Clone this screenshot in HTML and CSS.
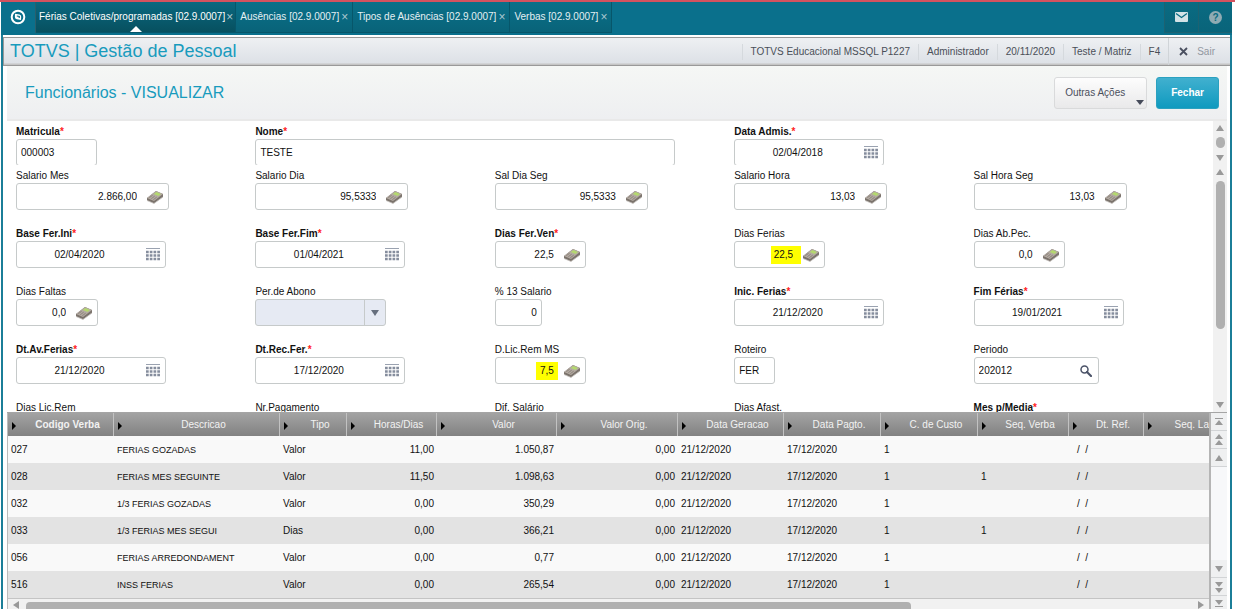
FILE: index.html
```
<!doctype html>
<html lang="pt-br">
<head>
<meta charset="utf-8">
<title>Gestão de Pessoal</title>
<link rel="stylesheet" href="styles.css">
</head>
<body>

<svg class="defs" width="0" height="0">
	<symbol id="calc" viewBox="0 0 18 14">
		<path d="M1 8 L10 1 L17 4 V7 L8 13.500 L1 10.500Z" fill="#7b736c"/>
		<path d="M1 8 L10 1 L17 4 L8 11Z" fill="#b3aaa2"/>
		<path d="M7.700 4 L10.500 1.900 L15 4 L12.500 6Z" fill="#b4d86f"/>
		<path d="M3.500 7.500 L7 5 M5.500 8.500 L9 6 M7.500 9.500 L11 7" stroke="#7f766e" stroke-width="1" stroke-dasharray="1.500 .600"/>
		<path d="M1 10.500 L8 13.500 L17 7" fill="none" stroke="#c9c5c1" stroke-width=".8"/>
	</symbol>
	<symbol id="cal" viewBox="0 0 14 13">
		<path d="M0 .5 H14" stroke="#9aa2b0"/>
		<path d="M0 4 H14 M0 7.500 H14 M0 11 H14" stroke="#858d9d" stroke-width="2.500" stroke-dasharray="2.700 1.060"/>
	</symbol>
	<symbol id="lens" viewBox="0 0 12 12">
		<circle cx="4.500" cy="4.500" r="3.500" fill="none" stroke="#4b5368" stroke-width="1.500"/>
		<path d="M7 7 L11 11" stroke="#4b5368" stroke-width="2.200" stroke-linecap="round"/>
	</symbol>
	<symbol id="up" viewBox="0 0 8 6"><path d="M4 0 L8 6 H0Z"/></symbol>
	<symbol id="down" viewBox="0 0 8 6"><path d="M4 6 L8 0 H0Z"/></symbol>
	<symbol id="up2" viewBox="0 0 8 12"><path d="M4 0 L8 5 H0Z M4 6 L8 11 H0Z"/></symbol>
	<symbol id="down2" viewBox="0 0 8 12"><path d="M4 6 L8 1 H0Z M4 12 L8 7 H0Z"/></symbol>
	<symbol id="first" viewBox="0 0 8 8"><path d="M0 0 H8 V1 H0Z M4 2 L8 7 H0Z"/></symbol>
	<symbol id="last" viewBox="0 0 8 8"><path d="M0 7 H8 V8 H0Z M4 6 L8 1 H0Z"/></symbol>
</svg>

<nav class="topbar">
	<button class="logo" aria-label="Menu">
		<svg width="16" height="16" viewBox="0 0 16 16"><circle cx="8" cy="8" r="6.300" fill="none" stroke="#fff" stroke-width="2"/><path d="M5 4.800 L9.500 5.500 Q11.500 6 11.200 8 L11 11 L6.800 10.300 Q4.800 9.800 4.900 8Z" fill="#fff"/><path d="M6.800 7 L9.300 7.400 L9.200 9" fill="none" stroke="#0a7089" stroke-width="1.200"/></svg>
	</button>
	<div class="tab active"><a href="#">Férias Coletivas/programadas [02.9.0007]</a><button aria-label="Fechar aba">×</button></div>
	<div class="tab"><a href="#">Ausências [02.9.0007]</a><button aria-label="Fechar aba">×</button></div>
	<div class="tab"><a href="#">Tipos de Ausências [02.9.0007]</a><button aria-label="Fechar aba">×</button></div>
	<div class="tab"><a href="#">Verbas [02.9.0007]</a><button aria-label="Fechar aba">×</button></div>
	<div class="tools">
		<button aria-label="Mensagens"><svg width="13" height="10" viewBox="0 0 13 10"><rect width="13" height="10" rx="1" fill="#d3e2e6"/><path d="M1 1.500 L6.500 5.500 L12 1.500" fill="none" stroke="#0a6b82" stroke-width="1.300"/></svg></button>
		<button aria-label="Ajuda"><span class="help">?</span></button>
	</div>
</nav>

<div class="frame">
	<header class="titlebar">
		<h1>TOTVS | Gestão de Pessoal</h1>
		<ul class="info">
			<li>TOTVS Educacional MSSQL P1227</li>
			<li>Administrador</li>
			<li>20/11/2020</li>
			<li>Teste / Matriz</li>
			<li>F4</li>
		</ul>
		<button class="exit"><svg width="9" height="9" viewBox="0 0 9 9"><path d="M1 1 L8 8 M8 1 L1 8" stroke="#4b5060" stroke-width="1.800"/></svg>Sair</button>
	</header>

	<main>
		<div class="pagehead">
			<h2>Funcionários - VISUALIZAR</h2>
			<button class="btn more">Outras Ações<svg width="8" height="5" viewBox="0 0 8 5"><path d="M0 0 H8 L4 5Z" fill="#454b5a"/></svg></button>
			<button class="btn primary">Fechar</button>
		</div>

		<div class="pane head-pane">
			<form class="fields">
				<div class="field"><label class="req" for="mat">Matricula</label><div class="box w81"><input id="mat" value="000003"></div></div>
				<div class="field span2"><label class="req" for="nome">Nome</label><div class="box w420"><input id="nome" value="TESTE"></div></div>
				<div class="field"><label class="req" for="adm">Data Admis.</label><div class="box date"><input id="adm" value="02/04/2018"><svg class="cal"><use href="#cal"/></svg></div></div>
			</form>
			<div class="scroll">
				<svg class="arrow"><use href="#up"/></svg><span class="thumb dot"></span><svg class="arrow end"><use href="#down"/></svg>
			</div>
		</div>

		<div class="pane body-pane">
			<form class="fields">
				<div class="field"><label for="salmes">Salario Mes</label><div class="box num w153"><input id="salmes" value="2.866,00"><svg class="calc"><use href="#calc"/></svg></div></div>
				<div class="field"><label for="saldia">Salario Dia</label><div class="box num w153"><input id="saldia" value="95,5333"><svg class="calc"><use href="#calc"/></svg></div></div>
				<div class="field"><label for="saldiaseg">Sal Dia Seg</label><div class="box num w153"><input id="saldiaseg" value="95,5333"><svg class="calc"><use href="#calc"/></svg></div></div>
				<div class="field"><label for="salhora">Salario Hora</label><div class="box num w153"><input id="salhora" value="13,03"><svg class="calc"><use href="#calc"/></svg></div></div>
				<div class="field"><label for="salhoraseg">Sal Hora Seg</label><div class="box num w153"><input id="salhoraseg" value="13,03"><svg class="calc"><use href="#calc"/></svg></div></div>

				<div class="field"><label class="req" for="baseini">Base Fer.Ini</label><div class="box date"><input id="baseini" value="02/04/2020"><svg class="cal"><use href="#cal"/></svg></div></div>
				<div class="field"><label class="req" for="basefim">Base Fer.Fim</label><div class="box date"><input id="basefim" value="01/04/2021"><svg class="cal"><use href="#cal"/></svg></div></div>
				<div class="field"><label class="req" for="ferven">Dias Fer.Ven</label><div class="box num w91"><input id="ferven" value="22,5"><svg class="calc"><use href="#calc"/></svg></div></div>
				<div class="field"><label for="ferias">Dias Ferias</label><div class="box num w91"><input id="ferias" class="mark" value="22,5"><svg class="calc"><use href="#calc"/></svg></div></div>
				<div class="field"><label for="abpec">Dias Ab.Pec.</label><div class="box num w91"><input id="abpec" value="0,0"><svg class="calc"><use href="#calc"/></svg></div></div>

				<div class="field"><label for="faltas">Dias Faltas</label><div class="box num w82"><input id="faltas" value="0,0"><svg class="calc"><use href="#calc"/></svg></div></div>
				<div class="field"><label for="abono">Per.de Abono</label><div class="box combo"><select id="abono" disabled><option></option></select><span class="drop"><svg class="arrow"><use href="#down"/></svg></span></div></div>
				<div class="field"><label for="sal13">% 13 Salario</label><div class="box num w47"><input id="sal13" value="0"></div></div>
				<div class="field"><label class="req" for="inic">Inic. Ferias</label><div class="box date"><input id="inic" value="21/12/2020"><svg class="cal"><use href="#cal"/></svg></div></div>
				<div class="field"><label class="req" for="fim">Fim Férias</label><div class="box date"><input id="fim" value="19/01/2021"><svg class="cal"><use href="#cal"/></svg></div></div>

				<div class="field"><label class="req" for="dtav">Dt.Av.Ferias</label><div class="box date"><input id="dtav" value="21/12/2020"><svg class="cal"><use href="#cal"/></svg></div></div>
				<div class="field"><label class="req" for="dtrec">Dt.Rec.Fer.</label><div class="box date"><input id="dtrec" value="17/12/2020"><svg class="cal"><use href="#cal"/></svg></div></div>
				<div class="field"><label for="lic">D.Lic.Rem MS</label><div class="box num w91"><input id="lic" class="mark short" value="7,5"><svg class="calc"><use href="#calc"/></svg></div></div>
				<div class="field"><label for="rot">Roteiro</label><div class="box w41"><input id="rot" value="FER"></div></div>
				<div class="field"><label for="per">Periodo</label><div class="box w125"><input id="per" value="202012"><svg class="lens"><use href="#lens"/></svg></div></div>

				<div class="field"><label for="licrem">Dias Lic.Rem</label><div class="box num w91"><input id="licrem"></div></div>
				<div class="field"><label for="nrpag">Nr.Pagamento</label><div class="box w91"><input id="nrpag"></div></div>
				<div class="field"><label for="difsal">Dif. Salário</label><div class="box num w91"><input id="difsal"></div></div>
				<div class="field"><label for="afast">Dias Afast.</label><div class="box num w91"><input id="afast"></div></div>
				<div class="field"><label class="req" for="media">Mes p/Media</label><div class="box w91"><input id="media"></div></div>
			</form>
			<div class="scroll">
				<svg class="arrow"><use href="#up"/></svg><span class="thumb"></span><svg class="arrow end"><use href="#down"/></svg>
			</div>
		</div>

		<div class="grid">
			<div class="grid-body">
				<table>
					<colgroup><col class="c106"><col class="c166"><col class="c67"><col class="c90"><col class="c120"><col class="c121"><col class="c106"><col class="c97"><col class="c97"><col class="c91"><col class="c75"><col></colgroup>
					<thead>
						<tr><th class="key">Codigo Verba</th><th>Descricao</th><th>Tipo</th><th>Horas/Dias</th><th>Valor</th><th>Valor Orig.</th><th>Data Geracao</th><th>Data Pagto.</th><th>C. de Custo</th><th>Seq. Verba</th><th>Dt. Ref.</th><th class="cut">Seq. La</th></tr>
					</thead>
					<tbody>
						<tr><td>027</td><td class="desc">FERIAS GOZADAS</td><td>Valor</td><td class="r">11,00</td><td class="r">1.050,87</td><td class="r">0,00</td><td>21/12/2020</td><td>17/12/2020</td><td>1</td><td></td><td class="ref">/ &nbsp;/</td><td></td></tr>
						<tr><td>028</td><td class="desc">FERIAS MES SEGUINTE</td><td>Valor</td><td class="r">11,50</td><td class="r">1.098,63</td><td class="r">0,00</td><td>21/12/2020</td><td>17/12/2020</td><td>1</td><td>1</td><td class="ref">/ &nbsp;/</td><td></td></tr>
						<tr><td>032</td><td class="desc">1/3 FERIAS GOZADAS</td><td>Valor</td><td class="r">0,00</td><td class="r">350,29</td><td class="r">0,00</td><td>21/12/2020</td><td>17/12/2020</td><td>1</td><td></td><td class="ref">/ &nbsp;/</td><td></td></tr>
						<tr><td>033</td><td class="desc">1/3 FERIAS MES SEGUI</td><td>Dias</td><td class="r">0,00</td><td class="r">366,21</td><td class="r">0,00</td><td>21/12/2020</td><td>17/12/2020</td><td>1</td><td>1</td><td class="ref">/ &nbsp;/</td><td></td></tr>
						<tr><td>056</td><td class="desc">FERIAS ARREDONDAMENT</td><td>Valor</td><td class="r">0,00</td><td class="r">0,77</td><td class="r">0,00</td><td>21/12/2020</td><td>17/12/2020</td><td>1</td><td></td><td class="ref">/ &nbsp;/</td><td></td></tr>
						<tr><td>516</td><td class="desc">INSS FERIAS</td><td>Valor</td><td class="r">0,00</td><td class="r">265,54</td><td class="r">0,00</td><td>21/12/2020</td><td>17/12/2020</td><td>1</td><td></td><td class="ref">/ &nbsp;/</td><td></td></tr>
					</tbody>
				</table>
				<div class="hscroll">
					<svg width="6" height="8" viewBox="0 0 6 8"><path d="M6 0 V8 L0 4Z"/></svg>
					<div class="htrack"><span class="hthumb"></span></div>
					<svg width="6" height="8" viewBox="0 0 6 8"><path d="M0 0 V8 L6 4Z"/></svg>
				</div>
			</div>
			<div class="pager">
				<button aria-label="Primeiro"><svg width="8" height="8"><use href="#first"/></svg></button>
				<button aria-label="Página anterior"><svg width="8" height="12"><use href="#up2"/></svg></button>
				<button aria-label="Anterior"><svg width="8" height="6"><use href="#up"/></svg></button>
				<span class="space"></span>
				<button aria-label="Próximo"><svg width="8" height="6"><use href="#down"/></svg></button>
				<button aria-label="Próxima página"><svg width="8" height="12"><use href="#down2"/></svg></button>
				<button aria-label="Último" class="half"><svg width="8" height="8"><use href="#last"/></svg></button>
			</div>
		</div>
	</main>
</div>

</body>
</html>
```
FILE: styles.css
```
* {
	box-sizing: border-box;
}
body {
	margin: 0;
	height: 100vh;
	overflow: hidden;
	display: flex;
	flex-direction: column;
	border-top: 2px solid #d4525f;
	font-family: "Liberation Sans", Arial, sans-serif;
	font-size: 10px;
	line-height: 14px;
	color: #111;
	background: #fff;
}
button, input, select {
	font: inherit;
	color: inherit;
	margin: 0;
	padding: 0;
	border: 0;
	background: none;
}
a {
	color: inherit;
	text-decoration: none;
}
h1, h2, ul {
	margin: 0;
	padding: 0;
	font-weight: normal;
}
.defs {
	position: absolute;
}

/* top bar */
.topbar {
	display: flex;
	flex: none;
	height: 33px;
	margin: 0 3px 0 1px;
	padding-bottom: 2px;
	background: #0a708c;
	color: #e4f0f3;
}
.logo {
	width: 35px;
	padding-top: 3px;
	border-right: 1px solid #2a5f6d;
}
.tab {
	position: relative;
	display: flex;
	align-items: center;
	gap: 2px;
	padding: 0 4px;
	border-right: 1px solid #07566a;
	border-bottom: 1px solid #07566a;
	background: linear-gradient(#0a7089, #096379);
	white-space: nowrap;
}
.tab button {
	color: #a9c8d0;
	font-size: 12px;
}
.tab.active {
	gap: 1px;
	padding: 0 2px 0 3px;
	background: linear-gradient(#0a6880, #07505f);
	color: #fff;
}
.tab.active::after {
	content: "";
	position: absolute;
	left: 50%;
	bottom: 0;
	margin-left: -6px;
	border: 6px solid transparent;
	border-top: 0;
	border-bottom-color: #fff;
}
.tools {
	display: flex;
	margin-left: auto;
}
.tools button {
	display: flex;
	align-items: center;
	justify-content: center;
	width: 34px;
	border: 1px solid #1c6272;
	border-width: 0 0 1px 1px;
	background: linear-gradient(#0a6b82, #09647a);
}
.help {
	width: 13px;
	height: 13px;
	border-radius: 50%;
	line-height: 13px;
	font-weight: bold;
	background: #8fabb3;
	color: #096a80;
}

/* window frame */
.frame {
	flex: 1;
	min-height: 0;
	display: flex;
	flex-direction: column;
	margin: 0 3px 0 1px;
	padding-top: 2px;
	border: 2px solid #1b7e98;
	border-width: 0 2px;
}
.titlebar {
	display: flex;
	flex: none;
	height: 29px;
	border: 1px solid #999;
	border-right: 0;
	background: linear-gradient(#eef0f3, #dde1e6 25px, #c5c5c5 26px);
	color: #4a4f58;
}
.titlebar h1 {
	flex: 1;
	padding-left: 6px;
	font-size: 18px;
	line-height: 26px;
	color: #189bbd;
}
.info {
	display: flex;
	align-items: center;
	list-style: none;
}
.info li {
	padding: 1px 8px;
	border-left: 1px solid #d5d9dd;
}
.exit {
	display: flex;
	align-items: center;
	gap: 9px;
	padding: 0 15px 0 10px;
	border-left: 1px solid #d0d4d8;
	color: #9297a0;
}
main {
	flex: 1;
	min-height: 0;
	display: flex;
	flex-direction: column;
	margin: 0 3px 0 4px;
}
.pagehead {
	display: flex;
	flex: none;
	align-items: center;
	gap: 9px;
	height: 55px;
	padding: 0 8px 0 18px;
	border-bottom: 2px solid #e9e9e9;
	background: linear-gradient(#f5f7f5, #eeeff1);
}
.pagehead h2 {
	flex: 1;
	font-size: 16px;
	color: #189bbd;
}
.btn {
	height: 32px;
	border-radius: 3px;
}
.more {
	position: relative;
	padding: 0 21px 0 10px;
	border: 1px solid #d9dadb;
	background: linear-gradient(#fdfdfd, #e9e9ea);
	color: #4a4f5c;
}
.more svg {
	position: absolute;
	right: 2px;
	bottom: 3px;
}
.primary {
	padding: 0 14px;
	border: 1px solid #2ba1bf;
	background: linear-gradient(#41b0cf, #0f9abf);
	color: #fff;
	font-weight: bold;
}

/* form */
.pane {
	display: flex;
	overflow: hidden;
}
.head-pane {
	flex: 0 0 44px;
}
.body-pane {
	flex: 1;
	min-height: 0;
}
.fields {
	flex: 1;
	display: grid;
	grid-template-columns: repeat(5, 1fr);
	align-content: start;
	row-gap: 17px;
	padding: 4px 0 0 9px;
}
.span2 {
	grid-column: span 2;
}
.field label {
	display: block;
	height: 14px;
}
.req {
	font-weight: bold;
}
.req::after {
	content: "*";
	color: #f22;
}
.box {
	display: flex;
	align-items: center;
	height: 27px;
	padding: 0 4px;
	border: 1px solid #c6caca;
	border-radius: 3px;
	background: #fff;
}
.box input {
	flex: 1;
	width: 0;
	min-width: 0;
	height: 20px;
}
.box svg {
	flex: none;
}
.num input {
	text-align: right;
}
.date {
	width: 150px;
}
.date input {
	text-align: center;
}
.w41 { width: 41px; }
.w47 { width: 47px; }
.w81 { width: 81px; }
.w82 { width: 82px; }
.w91 { width: 91px; }
.w125 { width: 125px; }
.w153 { width: 153px; }
.w420 { width: 420px; }
.calc {
	width: 18px;
	height: 14px;
	margin-left: 9px;
}
.cal {
	width: 14px;
	height: 13px;
	margin: 0 1px 0 8px;
}
.lens {
	width: 12px;
	height: 12px;
	margin-right: 2px;
}
/* highlighted values, the mark runs a little past the text */
.box .mark {
	margin-right: -8px;
	padding-right: 8px;
	background: linear-gradient(#ff0, #ff0) right / 30px 18px no-repeat;
}
.box .short {
	margin-right: -4px;
	padding-right: 4px;
	background-size: 22px 18px;
}
.combo {
	width: 131px;
	padding: 0;
	background: #e6eaf3;
}
.combo select {
	flex: 1;
	height: 25px;
	appearance: none;
}
.drop {
	display: flex;
	align-items: center;
	height: 25px;
	padding: 0 6px;
	border-left: 1px solid #c6caca;
}
.drop .arrow {
	fill: #666f7d;
}
.arrow {
	width: 8px;
	height: 6px;
	fill: #999;
}
.scroll {
	flex: none;
	display: flex;
	flex-direction: column;
	align-items: center;
	width: 14px;
	padding: 4px 0;
	background: #f1f1f1;
}
.scroll .end {
	margin-top: auto;
}
.thumb {
	width: 9px;
	height: 148px;
	margin-top: 6px;
	border-radius: 5px;
	background: #b0b0b0;
}
.dot {
	height: 11px;
}

/* verbas */
.grid {
	flex: none;
	display: flex;
	border-top: 1px solid #a5a5a5;
}
.grid-body {
	flex: 1;
	min-width: 0;
	overflow: hidden;
	border-left: 1px solid #bbb;
	border-right: 2px solid #b5b5b5;
}
table {
	width: 100%;
	table-layout: fixed;
	border-collapse: separate;
	border-spacing: 0;
}
.c67 { width: 67px; }
.c75 { width: 75px; }
.c90 { width: 90px; }
.c91 { width: 91px; }
.c97 { width: 97px; }
.c106 { width: 106px; }
.c120 { width: 120px; }
.c121 { width: 121px; }
.c166 { width: 166px; }
th {
	height: 23px;
	padding: 0;
	border-right: 1px solid #c2c2c2;
	background: linear-gradient(#a3a3a3, #828282);
	color: #f2f2f2;
	font-weight: normal;
	white-space: nowrap;
	overflow: hidden;
}
th::before {
	content: "";
	float: left;
	width: 0;
	margin: 4px 6px 0 4px;
	border: 4px solid transparent;
	border-left-color: #000;
	border-right: 0;
}
.key {
	font-weight: bold;
}
.cut {
	border-right: 0;
	text-align: right;
}
td {
	height: 27px;
	padding: 0 3px;
	white-space: nowrap;
}
tbody tr {
	background: #f9f9f9;
}
tbody tr:nth-child(even) {
	background: #e3e3e3;
}
.r {
	text-align: right;
}
.desc {
	font-size: 9px;
}
.ref {
	padding-left: 8px;
}
.hscroll {
	display: flex;
	align-items: flex-end;
	gap: 7px;
	height: 11px;
	padding: 0 5px;
	border-top: 1px solid #c4c4c4;
	background: #f1f1f1;
	fill: #999;
}
.htrack {
	flex: 1;
}
.hthumb {
	display: block;
	width: 76%;
	height: 7px;
	border-radius: 4px 4px 0 0;
	background: #b0b0b0;
}
.pager {
	display: flex;
	flex-direction: column;
	width: 16px;
	background: #f7f8fa;
}
.pager button {
	display: flex;
	align-items: center;
	justify-content: center;
	height: 18px;
	border: 1px solid #d2d4d6;
	border-width: 0 0 1px;
	background: #eff0f1;
	fill: #999;
}
.pager .space {
	flex: 1;
}
.pager .half {
	height: 13px;
	border-bottom: 0;
}
```
